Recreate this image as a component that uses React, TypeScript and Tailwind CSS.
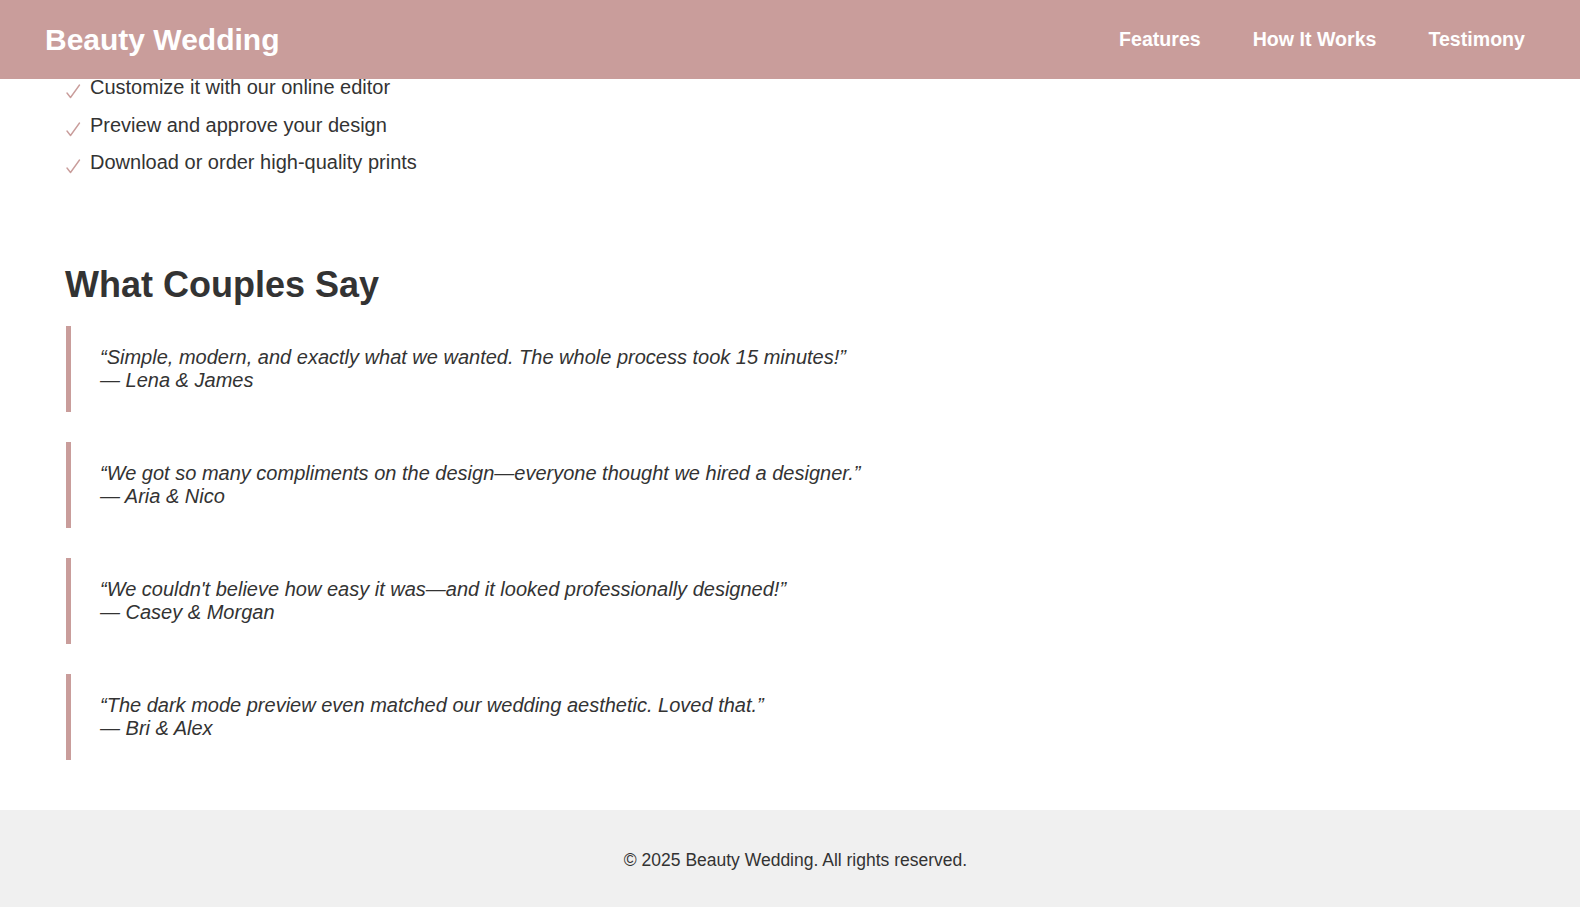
const steps = [
  'Customize it with our online editor',
  'Preview and approve your design',
  'Download or order high-quality prints',
];

const quotes = [
  {
    text: '“Simple, modern, and exactly what we wanted. The whole process took 15 minutes!”',
    by: '— Lena & James',
  },
  {
    text: '“We got so many compliments on the design—everyone thought we hired a designer.”',
    by: '— Aria & Nico',
  },
  {
    text: "“We couldn't believe how easy it was—and it looked professionally designed!”",
    by: '— Casey & Morgan',
  },
  {
    text: '“The dark mode preview even matched our wedding aesthetic. Loved that.”',
    by: '— Bri & Alex',
  },
];

function Check() {
  return (
    <svg width="15" height="15" viewBox="0 0 15 15" className="mt-[8px] mr-[9px] shrink-0">
      <path d="M1 9 L4.5 13.5 L13.5 1" fill="none" stroke="#c99d9b" strokeWidth="1.4" strokeLinecap="round" strokeLinejoin="round" />
    </svg>
  );
}

export default function App() {
  return (
    <div className="min-h-screen bg-white text-[#333] font-['Liberation_Sans',Arial,sans-serif]">
      <header className="relative z-10 h-[79px] bg-[#c99d9b] flex items-center justify-between pl-[45px] pr-[55px]">
        <span className="text-[30px] leading-[35px] font-bold text-white">Beauty Wedding</span>
        <nav className="flex items-center gap-[52px]">
          {['Features', 'How It Works', 'Testimony'].map((item) => (
            <a key={item} href="#" className="text-[19.6px] leading-[23px] font-bold text-white">
              {item}
            </a>
          ))}
        </nav>
      </header>

      <main className="px-[66px]">
        <ul className="-mt-[3px] flex flex-col gap-[14.5px]">
          {steps.map((step) => (
            <li key={step} className="flex items-start text-[20px] leading-[23px]">
              <Check />
              <span>{step}</span>
            </li>
          ))}
        </ul>

        <section className="mt-[90px]">
          <h2 className="-ml-px text-[36px] leading-[41px] font-bold mb-[21px]">What Couples Say</h2>
          <div className="flex flex-col gap-[30px]">
            {quotes.map((q) => (
              <blockquote
                key={q.by}
                className="border-l-[5px] border-[#c99d9b] py-[20px] pl-[29px] italic text-[20px] leading-[23px]"
              >
                <p>{q.text}</p>
                <p>{q.by}</p>
              </blockquote>
            ))}
          </div>
        </section>
      </main>

      <footer className="mt-[50px] h-[97px] bg-[#f0f0f0] pt-[40px] pl-[11px] text-center text-[17.5px] leading-[20px]">
        © 2025 Beauty Wedding. All rights reserved.
      </footer>
    </div>
  );
}
